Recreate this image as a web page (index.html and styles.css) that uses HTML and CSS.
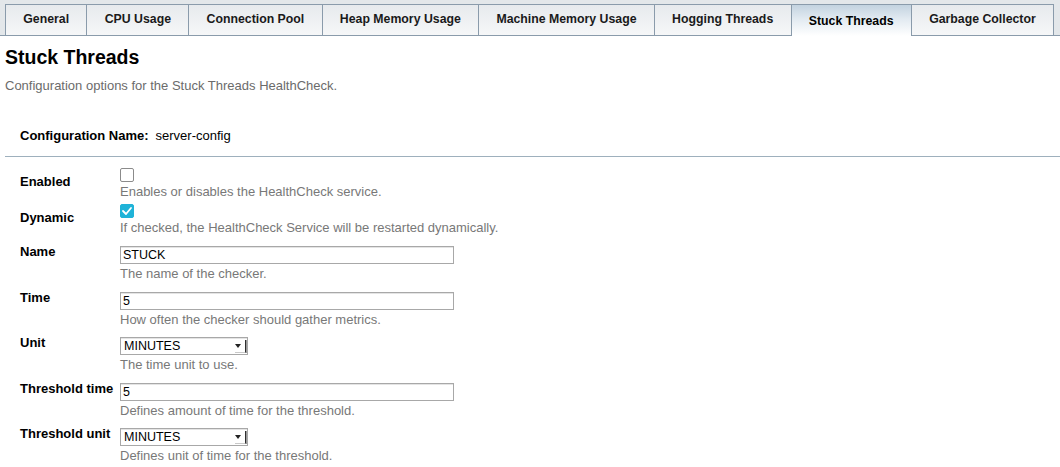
FILE: index.html
```html
<!DOCTYPE html>
<html lang="en">
<head>
<meta charset="utf-8">
<title>Stuck Threads</title>
<link rel="stylesheet" href="styles.css">
</head>
<body>
<div class="tabs">
  <div class="tab">General</div>
  <div class="tab">CPU Usage</div>
  <div class="tab">Connection Pool</div>
  <div class="tab">Heap Memory Usage</div>
  <div class="tab">Machine Memory Usage</div>
  <div class="tab">Hogging Threads</div>
  <div class="tab active">Stuck Threads</div>
  <div class="tab last">Garbage Collector</div>
</div>
<div class="page">
  <h1 class="title">Stuck Threads</h1>
  <p class="desc">Configuration options for the Stuck Threads HealthCheck.</p>
  <div class="config"><span class="config-label">Configuration Name:</span><span class="config-value">server-config</span></div>
  <hr class="sep">
  <div class="form">
    <div class="row row-check row-tight">
      <div class="label">Enabled</div>
      <div class="field">
        <span class="checkbox"></span>
        <div class="help">Enables or disables the HealthCheck service.</div>
      </div>
    </div>
    <div class="row row-check">
      <div class="label">Dynamic</div>
      <div class="field">
        <span class="checkbox checked"><svg width="14" height="14" viewBox="0 0 14 14"><polyline points="3,7 6,10 11,4" fill="none" stroke="#fff" stroke-width="1.8" stroke-linecap="round" stroke-linejoin="round"/></svg></span>
        <div class="help">If checked, the HealthCheck Service will be restarted dynamically.</div>
      </div>
    </div>
    <div class="row">
      <div class="label">Name</div>
      <div class="field">
        <input class="input" type="text" value="STUCK" readonly>
        <div class="help">The name of the checker.</div>
      </div>
    </div>
    <div class="row">
      <div class="label">Time</div>
      <div class="field">
        <input class="input" type="text" value="5" readonly>
        <div class="help">How often the checker should gather metrics.</div>
      </div>
    </div>
    <div class="row">
      <div class="label">Unit</div>
      <div class="field">
        <div class="select"><span class="select-text">MINUTES</span><span class="caret"><svg width="6" height="4" viewBox="0 0 6 4"><polygon points="0,0 6,0 3,4" fill="#222"/></svg></span></div>
        <div class="help">The time unit to use.</div>
      </div>
    </div>
    <div class="row">
      <div class="label">Threshold time</div>
      <div class="field">
        <input class="input" type="text" value="5" readonly>
        <div class="help">Defines amount of time for the threshold.</div>
      </div>
    </div>
    <div class="row">
      <div class="label">Threshold unit</div>
      <div class="field">
        <div class="select"><span class="select-text">MINUTES</span><span class="caret"><svg width="6" height="4" viewBox="0 0 6 4"><polygon points="0,0 6,0 3,4" fill="#222"/></svg></span></div>
        <div class="help">Defines unit of time for the threshold.</div>
      </div>
    </div>
  </div>
</div>
</body>
</html>
```
FILE: styles.css
```css
body {
  margin: 0;
  font-family: "Liberation Sans", Arial, sans-serif;
  font-size: 13px;
  color: #000;
  background: #fff;
}

.tabs {
  display: flex;
  align-items: flex-start;
  background: #e3e7ea;
  padding: 4px 0 0 5px;
  border-bottom: 1px solid #8a9bab;
}

.tab {
  box-sizing: border-box;
  height: 31px;
  padding: 0 17.3px 2px;
  line-height: 28px;
  font-size: 12.3px;
  font-weight: bold;
  color: #1a1a1a;
  white-space: nowrap;
  border-top: 1px solid #8a9bab;
  border-left: 1px solid #8a9bab;
  background: linear-gradient(#e7eaed, #f6f7f8);
}

.tab.last {
  border-right: 1px solid #8a9bab;
}

.tab.active {
  height: 32px;
  margin-bottom: -1px;
  padding-top: 2px;
  padding-bottom: 1px;
  color: #000;
  background: linear-gradient(#c3d3e0 0%, #e2eaf1 45%, #ffffff 100%);
  position: relative;
  z-index: 1;
}

.page {
  padding-left: 5px;
}

.title {
  margin: 10px 0 0;
  font-size: 19.5px;
  line-height: 22px;
  font-weight: bold;
}

.desc {
  margin: 10px 0 0;
  color: #6b6b6b;
  line-height: 15px;
}

.config {
  margin: 35px 0 0 15px;
  display: flex;
  gap: 7px;
  line-height: 15px;
}

.config-label {
  font-weight: bold;
}

.sep {
  margin: 13px 0 0;
  border: 0;
  border-top: 1px solid #9eb0bd;
  height: 0;
}

.form {
  padding: 11px 0 0 15px;
}

.row {
  display: grid;
  grid-template-columns: 100px 1fr;
  margin-bottom: 10.5px;
}

.row-check {
  margin-bottom: 11px;
}

.row-tight {
  margin-bottom: 5px;
}

.label {
  font-weight: bold;
  line-height: 15px;
  margin-top: -2px;
  white-space: nowrap;
}

.row-check .label {
  margin-top: 6px;
}

.checkbox {
  display: block;
  width: 14px;
  height: 14px;
  box-sizing: border-box;
  border: 1px solid #8b8b8b;
  border-radius: 2px;
  background: #fff;
}

.checkbox.checked {
  background: #1fb3d8;
  border-color: #1fb3d8;
  position: relative;
}

.checkbox.checked svg {
  position: absolute;
  left: -1px;
  top: -1px;
}

.help {
  color: #787878;
  line-height: 15px;
  margin-top: 2px;
}

.input {
  display: block;
  box-sizing: border-box;
  width: 334px;
  height: 18px;
  margin: 0;
  border: 1px solid #a8a8a8;
  box-shadow: inset 0 1px 0 #e4e4e4;
  padding: 0 2px;
  font-family: "Liberation Sans", Arial, sans-serif;
  font-size: 12.5px;
  line-height: 16px;
  color: #000;
  background: #fff;
  outline: none;
}

.select {
  display: flex;
  align-items: center;
  box-sizing: border-box;
  width: 128px;
  height: 18px;
  border: 1px solid #a8a8a8;
  box-shadow: inset 0 1px 0 #e4e4e4;
  padding-left: 3px;
  font-size: 12.5px;
  background: #fff;
}

.select-text {
  line-height: 16px;
}

.caret {
  margin-left: auto;
  margin-right: 1px;
  width: 10px;
  height: 12px;
  margin-top: 1px;
  display: flex;
  align-items: center;
  justify-content: flex-start;
  border-right: 1px solid #2e2e2e;
  border-bottom: 1px solid #c9c9c9;
  box-shadow: 1px 0 0 #9a9a9a;
}
```
